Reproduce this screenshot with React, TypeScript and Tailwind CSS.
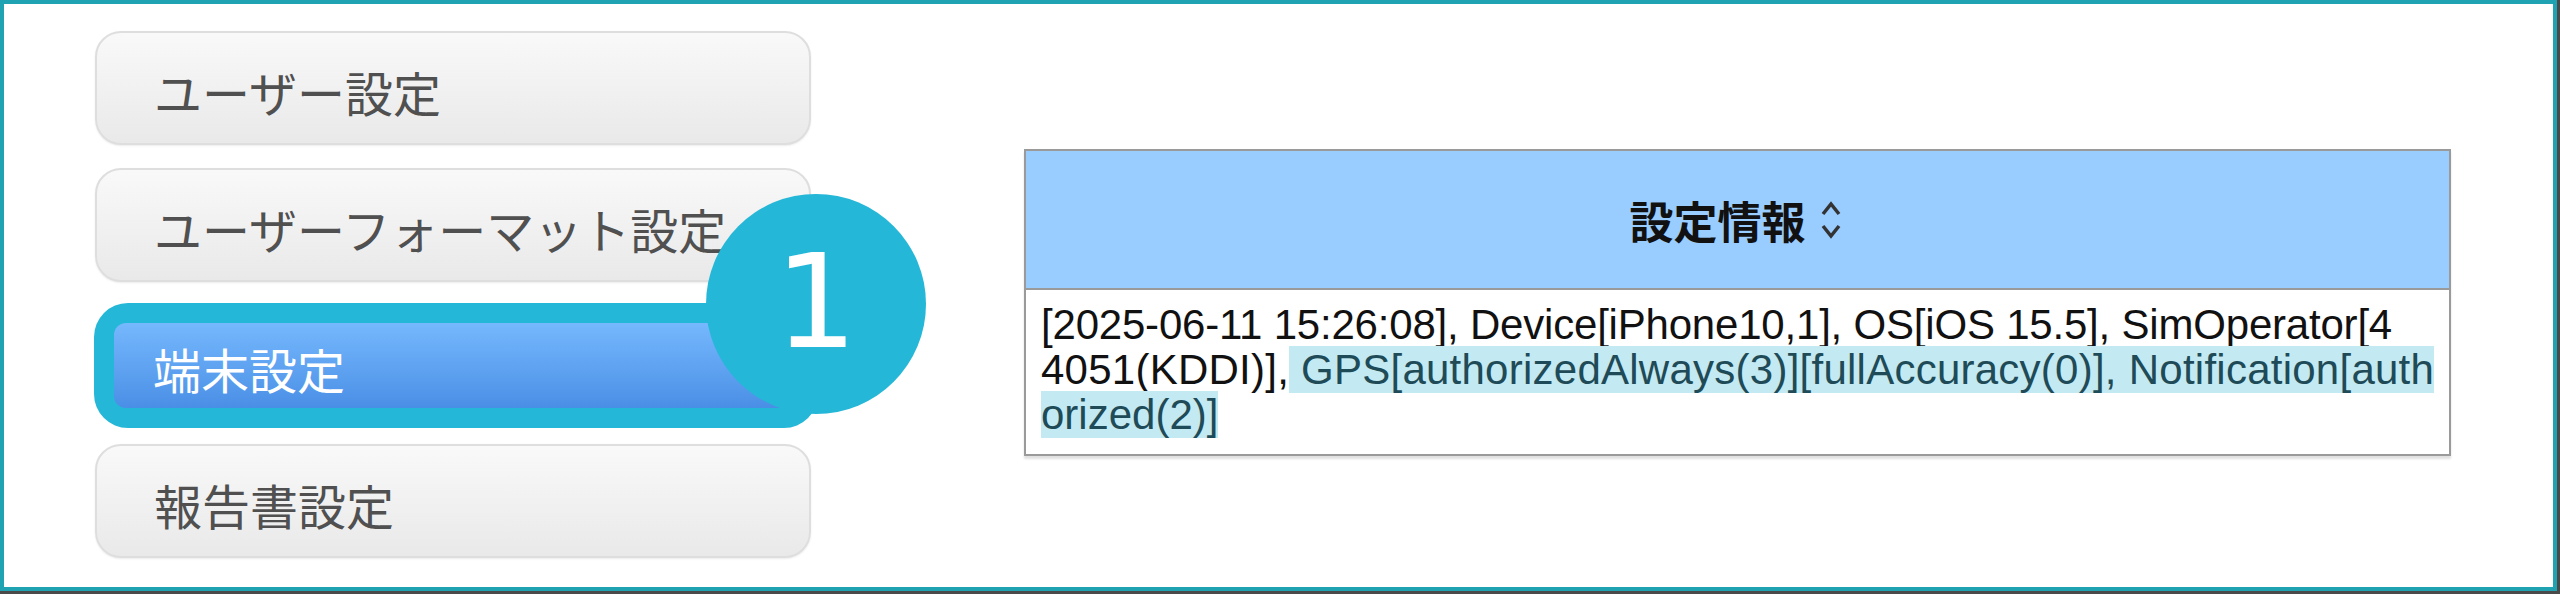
import React from 'react';

const jp = { fontFamily: '"Noto Sans CJK JP", "Noto Sans", sans-serif' };

function NavButton({ label, className = '' }: { label: string; className?: string }) {
  return (
    <div
      className={`w-[716px] h-[114px] flex items-center pl-[57px] rounded-[26px] border-2 border-[#dedede] bg-gradient-to-b from-[#f9f9f9] to-[#e9e9e9] shadow-[0_1px_2px_rgba(0,0,0,0.08)] ${className}`}
    >
      <span className="text-[48px] text-[#505050] leading-none pt-[6px]" style={jp}>
        {label}
      </span>
    </div>
  );
}

function SortIcon() {
  return (
    <svg width="30" height="50" viewBox="0 0 30 50" className="ml-[10px]">
      <polyline points="7,19 15,9 23,19" fill="none" stroke="#333" strokeWidth="3.5" />
      <polyline points="7,31 15,41 23,31" fill="none" stroke="#333" strokeWidth="3.5" />
    </svg>
  );
}

export default function App() {
  return (
    <div className="w-[2560px] h-[594px] bg-[#4a4a4a]">
      <div className="w-[2557px] h-[591px] border-4 border-[#1fa3b3] bg-white flex items-start">
        {/* left menu */}
        <div className="relative ml-[91px] mt-[27px] w-[727px] flex flex-col">
          <NavButton label="ユーザー設定" />
          <NavButton label="ユーザーフォーマット設定" className="mt-[23px]" />
          <div className="mt-[21px] -ml-[1px] w-[724px] h-[125px] p-[20px] rounded-[34px] bg-[#25b7d7]">
            <div className="h-full rounded-[12px] bg-gradient-to-b from-[#76b8fd] to-[#4a8fe6] flex items-center pl-[39px]">
              <span className="text-[48px] text-white leading-none pt-[4px]" style={jp}>
                端末設定
              </span>
            </div>
          </div>
          <NavButton label="報告書設定" className="mt-[16px]" />

          {/* step badge */}
          <div className="absolute left-[611px] top-[163px] w-[220px] h-[220px] rounded-full bg-[#25b7d7] flex items-center justify-center">
            <span
              className="text-white text-[130px] font-normal leading-none pb-[4px]"
              style={{ fontFamily: '"DejaVu Sans", sans-serif' }}
            >
              1
            </span>
          </div>
        </div>

        {/* settings table */}
        <div className="ml-[202px] mt-[145px] w-[1427px] border-2 border-[#9a9a9a] shadow-[0_3px_2px_rgba(0,0,0,0.12)]">
          <div className="h-[139px] bg-[#99ccff] border-b-2 border-[#9a9a9a] flex items-center justify-center">
            <span className="text-[44px] font-bold text-[#111]" style={jp}>
              設定情報
            </span>
            <SortIcon />
          </div>
          <div
            className="pt-[12px] pb-[17px] pl-[15px] text-[42px] leading-[45px] text-[#111] whitespace-nowrap"
            style={{ fontFamily: '"Liberation Sans", Arial, sans-serif' }}
          >
            <div className="tracking-[-0.2px]">[2025-06-11 15:26:08], Device[iPhone10,1], OS[iOS 15.5], SimOperator[4</div>
            <div className="tracking-[0.25px]">
              4051(KDDI)],
              <span className="bg-[#c3e9f2] text-[#1e4b57]"> GPS[authorizedAlways(3)][fullAccuracy(0)], Notification[auth</span>
            </div>
            <div>
              <span className="bg-[#c3e9f2] text-[#1e4b57]">orized(2)]</span>
            </div>
          </div>
        </div>
      </div>
    </div>
  );
}
